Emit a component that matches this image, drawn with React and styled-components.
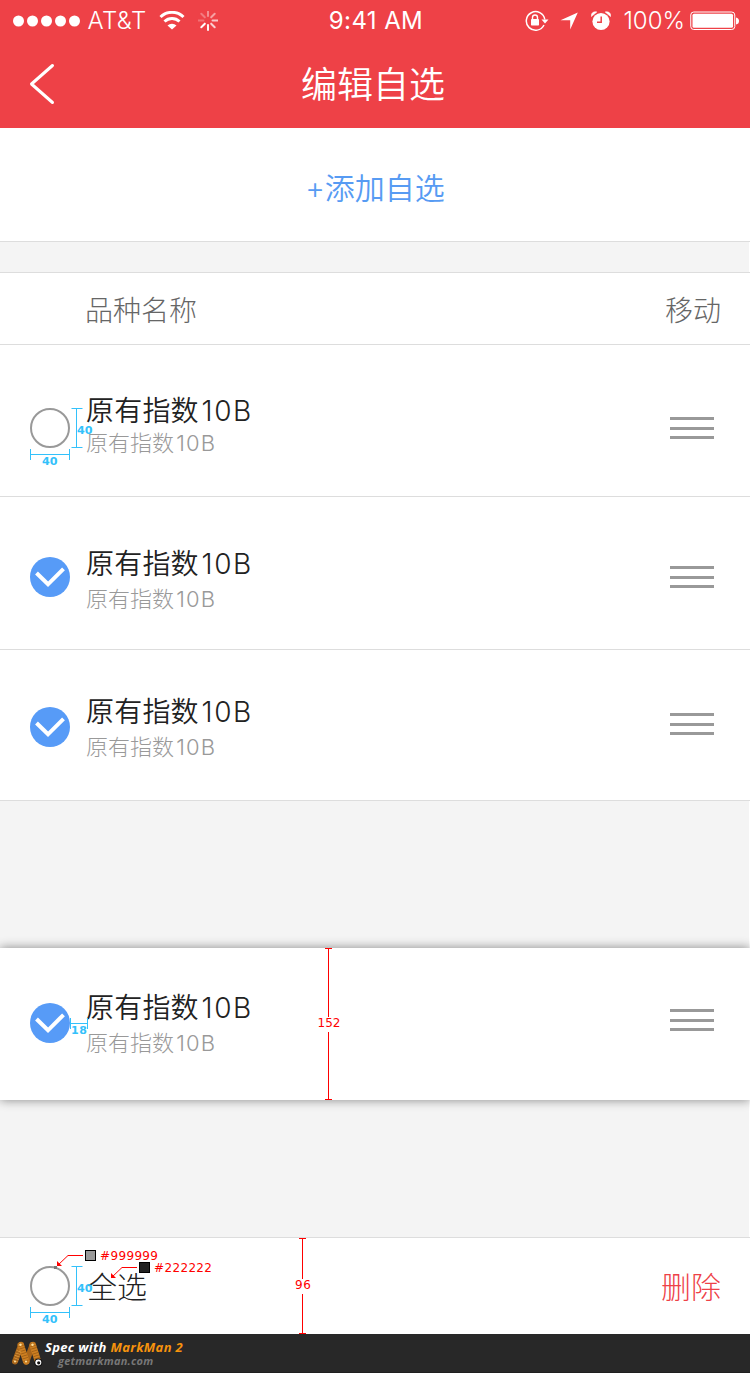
import React from "react";
import styled, { createGlobalStyle } from "styled-components";

const Global = createGlobalStyle`
  *, *::before, *::after { box-sizing: border-box; }
  body { margin: 0; background: #fff; }
`;

const latin = `"Inter", "Noto Sans CJK SC", sans-serif`;

const Screen = styled.div`
  position: relative;
  width: 750px;
  height: 1373px;
  display: flex;
  flex-direction: column;
  overflow: hidden;
  background: #fff;
  font-family: ${latin};
  font-weight: 300;
  white-space: nowrap;
`;

const Header = styled.header`
  height: 128px;
  background: #ee4147;
  color: #fff;
`;

const StatusBar = styled.div`
  height: 40px;
  display: grid;
  grid-template-columns: 1fr auto 1fr;
  align-items: center;
  padding: 0 11px 0 13px;
  line-height: 40px;
`;

const StatusSide = styled.div`
  display: flex;
  align-items: center;
  justify-content: ${(p) => (p.$end ? "flex-end" : "flex-start")};
`;

const StatusText = styled.span`
  line-height: 41px;
  font-size: ${(p) => p.$size || 24}px;
  font-weight: ${(p) => p.$weight || 300};
  letter-spacing: ${(p) => p.$track || 0}px;
  margin-left: ${(p) => p.$left || 0}px;
  margin-right: ${(p) => p.$right || 0}px;
`;

const StatusIcon = styled.svg`
  display: block;
  flex: none;
  margin-left: ${(p) => p.$left || 0}px;
`;

const NavBar = styled.div`
  height: 88px;
  display: grid;
  grid-template-columns: 100px 1fr 100px;
  align-items: center;
  padding-right: 4px;
`;

const BackIcon = styled.svg`
  display: block;
  margin-left: 28px;
`;

const Title = styled.h1`
  margin: 0;
  padding-top: 3px;
  text-align: center;
  font-size: 36px;
  font-weight: 350;
  line-height: 85px;
`;

const AddButton = styled.button`
  height: 114px;
  padding: 2px 0 0;
  border: 0;
  border-bottom: 1px solid #ddd;
  background: #fff;
  color: #579bf3;
  font-family: inherit;
  font-weight: 350;
  font-size: 30px;
`;

const Gap = styled.div`
  height: ${(p) => p.$height}px;
  margin-right: 1px;
  background: #f4f4f4;
`;

const TableHead = styled.div`
  height: 73px;
  display: flex;
  justify-content: space-between;
  align-items: center;
  padding: 0 29px 0 85px;
  border-top: 1px solid #ddd;
  border-bottom: 1px solid #ddd;
  color: #666;
  font-size: 28px;
`;

const Row = styled.div`
  position: relative;
  flex: none;
  height: ${(p) => p.$height}px;
  display: flex;
  align-items: flex-start;
  padding: 0 36px 0 30px;
  background: #fff;
  border-bottom: ${(p) => (p.$floating ? "0" : "1px solid #ddd")};
  box-shadow: ${(p) => (p.$floating ? "0 0 10px rgba(0,0,0,.45)" : "none")};
`;

const CheckIcon = styled.svg`
  display: block;
  flex: none;
  margin-top: ${(p) => p.$top || 0}px;
`;

const Names = styled.div`
  flex: 1;
  margin-left: 16px;
  padding-top: ${(p) => p.$top}px;
`;

const Name = styled.div`
  font-size: 28px;
  font-weight: 350;
  line-height: 32px;
  color: #222;
  letter-spacing: 0.2px;
`;

const SubName = styled.div`
  margin-top: ${(p) => p.$gap}px;
  font-size: 22px;
  line-height: 26px;
  color: #999;
`;

const Code = styled.span`
  margin-left: 0.1em;
  font-weight: 300;
  font-kerning: none;
  letter-spacing: 0.055em;
`;

const Handle = styled.div`
  width: 44px;
  height: 22px;
  margin-top: ${(p) => p.$top}px;
  display: flex;
  flex-direction: column;
  justify-content: space-between;
`;

const HandleBar = styled.span`
  height: 3px;
  background: #999;
`;

const Footer = styled.footer`
  height: 97px;
  display: flex;
  align-items: center;
  padding: 0 29px 0 30px;
  border-top: 1px solid #ddd;
  background: #fff;
  font-size: 30px;
`;

const SelectAll = styled.span`
  flex: 1;
  margin-left: 17px;
  padding-bottom: 3px;
  color: #222;
`;

const Delete = styled.span`
  padding-bottom: 3px;
  color: #ee4147;
`;

const Credit = styled.div`
  height: 39px;
  display: flex;
  align-items: flex-start;
  padding: 6px 0 0 10px;
  background: #282828;
  border-bottom: 1px solid #1f1f1f;
`;

const CreditText = styled.div`
  font-family: "Open Sans", sans-serif;
  font-style: italic;
  font-weight: 700;
  color: #fff;
  margin-left: 1px;
`;

const CreditLine = styled.div`
  font-size: 13px;
  line-height: 15px;
  letter-spacing: 0.33px;
`;

const CreditName = styled.span`
  color: #f7930d;
`;

const CreditSite = styled.div`
  padding-left: 13px;
  font-size: 11px;
  line-height: 12px;
  letter-spacing: 0.25px;
  color: #777;
`;

const Notes = styled.svg`
  position: absolute;
  inset: 0;
  pointer-events: none;
  font-family: "DejaVu Sans", sans-serif;
  font-weight: 400;
`;

function Check({ on, top }) {
  return (
    <CheckIcon $top={top} width="40" height="40" viewBox="0 0 40 40">
      {on ? (
        <>
          <circle cx="20" cy="20" r="20" fill="#579bf7" />
          <path d="M6.5 16 18 27.3 33.5 11.8" fill="none" stroke="#fff" strokeWidth="4" />
        </>
      ) : (
        <circle cx="20" cy="20" r="19" fill="#fff" stroke="#999" strokeWidth="2" />
      )}
    </CheckIcon>
  );
}

function FundRow({ height, on, floating, checkTop, nameTop, subGap, handleTop }) {
  return (
    <Row $height={height} $floating={floating}>
      <Check on={on} top={checkTop} />
      <Names $top={nameTop}>
        <Name>原有指数<Code>10B</Code></Name>
        <SubName $gap={subGap}>原有指数<Code>10B</Code></SubName>
      </Names>
      <Handle $top={handleTop}>
        <HandleBar />
        <HandleBar />
        <HandleBar />
      </Handle>
    </Row>
  );
}

function BoxSize({ y }) {
  return (
    <g>
      <path
        d={`M71.5 ${y + 0.5}h11M71.5 ${y + 39.5}h11M76.5 ${y}v40M30.5 ${y + 41}v11M69.5 ${y + 41}v11M30 ${y + 46.5}h40`}
        fill="none"
        stroke="#33c1fb"
      />
      <text x="77" y={y + 26} textLength="15.5" lengthAdjust="spacingAndGlyphs">40</text>
      <text x="42" y={y + 57} textLength="15.5" lengthAdjust="spacingAndGlyphs">40</text>
    </g>
  );
}

function Height({ x, top, bottom, label, width }) {
  const mid = (top + bottom) / 2;
  return (
    <g>
      <path
        d={`M${x - 3} ${top + 0.5}h7M${x - 3} ${bottom - 0.5}h7M${x + 0.5} ${top}V${mid - 7}M${x + 0.5} ${mid + 8}V${bottom}`}
        stroke="#f00"
        fill="none"
      />
      <text x={x + 1 - width / 2} y={mid + 3} fontSize="12" fill="#f00" textLength={width}>{label}</text>
    </g>
  );
}

function ColorNote({ x, y, color }) {
  return (
    <g>
      <path d={`M${x} ${y}l11-10.5h15`} stroke="#f00" fill="none" />
      <path d={`M${x} ${y}v-5l5 5z`} fill="#f00" />
      <rect x={x + 28.5} y={y - 15.5} width="10" height="10" fill={color} stroke="#000" />
      <text x={x + 43} y={y - 6} fontSize="12" fill="#f00" textLength="58">{color}</text>
    </g>
  );
}

function Annotations() {
  return (
    <Notes width="750" height="1373" viewBox="0 0 750 1373">
      <g fill="#33c1fb" fontSize="11" fontWeight="700">
        <BoxSize y={408} />
        <BoxSize y={1266} />
        <path d="M70.5 1018v11M87.5 1018v11M70 1023.5h17" fill="none" stroke="#33c1fb" />
        <text x="71" y="1034" textLength="16">18</text>
      </g>
      <Height x={328} top={948} bottom={1100} label="152" width={23} />
      <Height x={302} top={1238} bottom={1334} label="96" width={16} />
      <rect x="54" y="1266" width="3" height="3" fill="#777" />
      <ColorNote x={57} y={1266} color="#999999" />
      <ColorNote x={111} y={1278} color="#222222" />
    </Notes>
  );
}

function Logo() {
  return (
    <svg width="34" height="30" viewBox="0 0 34 30">
      <g fill="none">
        <g strokeLinecap="round">
          <path d="M11 5 5 21.5" stroke="#a8651a" strokeWidth="6" />
          <path d="M22.5 5 16.5 21.5" stroke="#a8651a" strokeWidth="6" />
          <path d="M10.8 5 16.2 21.5" stroke="#cc7f22" strokeWidth="6.5" />
          <path d="M22.8 5 28 21.5" stroke="#cc7f22" strokeWidth="6.5" />
        </g>
        <path d="M10.5 3 16.5 23M22.5 3 28.5 23" stroke="#9c5c14" strokeWidth="6" strokeDasharray=".6 2" />
        <path d="M9 11 5 22.5" stroke="#e8a546" strokeWidth="5" strokeDasharray=".6 2" />
      </g>
      <g fill="#ffe3a0">
        <circle cx="10.5" cy="4.8" r="1.2" />
        <circle cx="22.5" cy="4.8" r="1.2" />
        <circle cx="5" cy="21.5" r="1" />
        <circle cx="16" cy="21.5" r="1" />
      </g>
      <circle cx="28.3" cy="22.5" r="4" fill="#111" />
      <circle cx="28.3" cy="22.5" r="3" fill="#fff" />
      <circle cx="28.7" cy="22.8" r="1.6" fill="#111" />
    </svg>
  );
}

export default function App() {
  return (
    <Screen>
      <Global />
      <Header>
        <StatusBar>
          <StatusSide>
            <StatusIcon width="68" height="12" fill="#fff">
              {[5.5, 19.5, 33.5, 47.5, 61.5].map((x) => (
                <circle key={x} cx={x} cy="6" r="5.5" />
              ))}
            </StatusIcon>
            <StatusText $left={6.5} $track={0.4}>AT&amp;T</StatusText>
            <StatusIcon $left={12} width="26" height="20" viewBox="0 0 26 20" fill="none" stroke="#fff" strokeWidth="3">
              <path d="M1.5 6a16.5 16.5 0 0 1 23 0M5.5 10.5a11 11 0 0 1 15 0" />
              <path d="M8.5 14.5a6.5 6.5 0 0 1 9 0L13 18.500z" fill="#fff" stroke="none" />
            </StatusIcon>
            <StatusIcon $left={13} width="20" height="20" viewBox="0 0 20 20" stroke="#fff" strokeWidth="2" strokeLinecap="round">
              {[0.4, 0.5, 0.7, 0.75, 0.95, 1, 0.25, 0.3].map((o, i) => (
                <path key={i} d="M10 .5v5" opacity={o} transform={`translate(0 -.5) rotate(${i * 45} 10 10)`} />
              ))}
            </StatusIcon>
          </StatusSide>
          <StatusText $weight={430} $size={24} $track={0.4}>9:41 AM</StatusText>
          <StatusSide $end>
            <StatusIcon width="24" height="22" viewBox="0 0 24 22">
              <path d="M19 15A9.300 9.300 0 1 1 19.800 9.500" fill="none" stroke="#fff" strokeWidth="1.500" />
              <path d="M16.500 9.500h7l-3.500 4z" fill="#fff" />
              <rect x="6" y="9" width="8" height="6.500" rx=".7" fill="#fff" />
              <path d="M7.500 9.500V7.500a2.500 2.500 0 0 1 5 0v2" fill="none" stroke="#fff" strokeWidth="1.400" />
            </StatusIcon>
            <StatusIcon $left={11} width="18" height="18" viewBox="0 0 18 18" fill="#fff">
              <path d="M17.8.5 10.2 17.5V8.3H.5z" />
            </StatusIcon>
            <StatusIcon $left={13} width="20" height="20" viewBox="0 0 20 20">
              <path d="M.4 5.500C-.2 2.500 2.300.1 5.800 1zM19.600 5.500C20.200 2.500 17.700.1 14.200 1z" fill="#fff" stroke="#fff" strokeWidth=".6" />
              <circle cx="10" cy="10.500" r="9" fill="#ee4147" />
              <circle cx="10" cy="10.500" r="8.600" fill="#fff" />
              <path d="M10.200 5.500v5.700H6" fill="none" stroke="#ee4147" strokeWidth="1.500" />
            </StatusIcon>
            <StatusText $left={12} $right={5}>100%</StatusText>
            <StatusIcon width="49" height="20" viewBox="0 0 49 20">
              <rect x=".75" y="1" width="44" height="17.500" rx="3" fill="none" stroke="#fff" />
              <rect x="2.500" y="2.750" width="40.500" height="14" rx="1.500" fill="#fff" />
              <path d="M46 6.500q3 .5 3 3.500t-3 3.500z" fill="#fff" />
            </StatusIcon>
          </StatusSide>
        </StatusBar>
        <NavBar>
          <BackIcon width="28" height="42" viewBox="0 0 28 42">
            <path d="M24.5 2.5 3.5 21 24.5 39.5" fill="none" stroke="#fff" strokeWidth="3" strokeLinecap="round" strokeLinejoin="round" />
          </BackIcon>
          <Title>编辑自选</Title>
        </NavBar>
      </Header>
      <AddButton>+添加自选</AddButton>
      <Gap $height={30} />
      <TableHead>
        <span>品种名称</span>
        <span>移动</span>
      </TableHead>
      <FundRow height={152} checkTop={63} nameTop={50} subGap={3} handleTop={72} />
      <FundRow height={153} on checkTop={60} nameTop={51} subGap={6} handleTop={69} />
      <FundRow height={151} on checkTop={57} nameTop={46} subGap={6} handleTop={63} />
      <Gap $height={147} />
      <FundRow height={152} on floating checkTop={55} nameTop={44} subGap={6} handleTop={61} />
      <Gap $height={137} />
      <Footer>
        <Check />
        <SelectAll>全选</SelectAll>
        <Delete>删除</Delete>
      </Footer>
      <Credit>
        <Logo />
        <CreditText>
          <CreditLine>
            Spec with <CreditName>MarkMan 2</CreditName>
          </CreditLine>
          <CreditSite>getmarkman.com</CreditSite>
        </CreditText>
      </Credit>
      <Annotations />
    </Screen>
  );
}
